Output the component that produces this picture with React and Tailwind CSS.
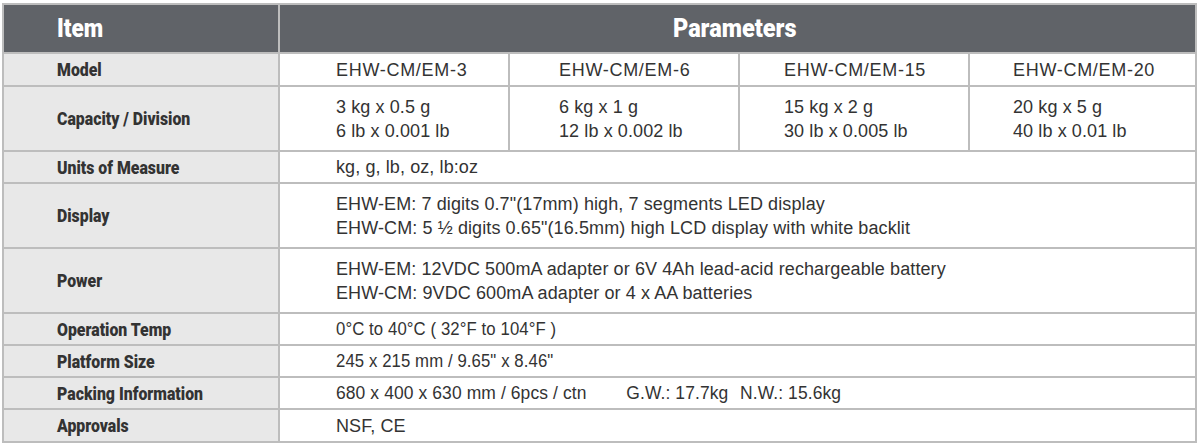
import React from "react";

const cond = "[font-family:Roboto,'Liberation_Sans',sans-serif] font-black";
const label = `bg-[#e8e8e8] pl-[53px] flex items-center text-[18px] text-[#333] ${cond}`;
const val = "bg-white flex flex-col justify-center text-[18px] leading-[24px] text-[#333] tracking-[0.1px] [font-family:'Liberation_Sans',Arial,sans-serif]";
const sx = "inline-block origin-left scale-x-[0.88] whitespace-nowrap";
const narrow = "inline-block origin-left scale-x-[0.93] whitespace-nowrap";

const rows = [
  { label: "Units of Measure", h: "h-[30px]", lines: ["kg, g, lb, oz, lb:oz"] },
  { label: "Display", h: "h-[63px]", lines: ['EHW-EM: 7 digits 0.7"(17mm) high, 7 segments LED display', 'EHW-CM: 5 ½ digits 0.65"(16.5mm) high LCD display with white backlit'] },
  { label: "Power", h: "h-[63px]", lines: ["EHW-EM: 12VDC 500mA adapter or 6V 4Ah lead-acid rechargeable battery", "EHW-CM: 9VDC 600mA adapter or 4 x AA batteries"] },
  { label: "Operation Temp", h: "h-[30px]", lines: ["0°C to 40°C ( 32°F to 104°F )"], s: narrow },
  { label: "Platform Size", h: "h-[30px]", lines: ['245 x 215 mm / 9.65" x 8.46"'], s: narrow },
  { label: "Packing Information", h: "h-[30px]", lines: ["PACK"] },
  { label: "Approvals", h: "h-[31px]", lines: ["NSF, CE"] },
];

function L({ children }) {
  return <span className={sx}>{children}</span>;
}

export default function App() {
  return (
    <div className="w-[1200px] h-[446px] bg-white pt-[3px] pl-[2px]">
      <div className="grid grid-cols-[274px_228px_228px_228px_225px] gap-[2px] p-[2px] bg-[#bdbdbd] w-fit">
        <div className={`h-[47px] bg-[#606368] pl-[53px] flex items-center text-white text-[25px] ${cond}`}>
          <span className="inline-block origin-left scale-x-[0.9] whitespace-nowrap">Item</span>
        </div>
        <div className={`col-span-4 h-[47px] bg-[#606368] flex items-center justify-center pr-[6px] text-white text-[25px] ${cond}`}>
          <span className="inline-block origin-center scale-x-[0.94] whitespace-nowrap">Parameters</span>
        </div>

        <div className={`${label} h-[31px]`}><L>Model</L></div>
        <div className={`${val} pl-[56px] tracking-[0.7px]`}>EHW-CM/EM-3</div>
        <div className={`${val} pl-[49px] tracking-[0.7px]`}>EHW-CM/EM-6</div>
        <div className={`${val} pl-[44px] tracking-[0.7px]`}>EHW-CM/EM-15</div>
        <div className={`${val} pl-[43px] tracking-[0.7px]`}>EHW-CM/EM-20</div>

        <div className={`${label} h-[63px]`}><L>Capacity / Division</L></div>
        <div className={`${val} pl-[56px]`}><span>3 kg x 0.5 g</span><span>6 lb x 0.001 lb</span></div>
        <div className={`${val} pl-[49px]`}><span>6 kg x 1 g</span><span>12 lb x 0.002 lb</span></div>
        <div className={`${val} pl-[44px]`}><span>15 kg x 2 g</span><span>30 lb x 0.005 lb</span></div>
        <div className={`${val} pl-[43px]`}><span>20 kg x 5 g</span><span>40 lb x 0.01 lb</span></div>

        {rows.map((r) => (
          <React.Fragment key={r.label}>
            <div className={`${label} ${r.h}`}><L>{r.label}</L></div>
            <div className={`${val} col-span-4 pl-[56px]`}>
              {r.lines[0] === "PACK" ? (
                <div>
                  <span className="inline-flex origin-left scale-x-[0.97] whitespace-nowrap">
                    <span>680 x 400 x 630 mm / 6pcs / ctn</span>
                    <span className="ml-[41px]">G.W.: 17.7kg</span>
                    <span className="ml-[12px]">N.W.: 15.6kg</span>
                  </span>
                </div>
              ) : (
                r.lines.map((l) => (
                  <div key={l}>
                    <span className={r.s || ""}>{l}</span>
                  </div>
                ))
              )}
            </div>
          </React.Fragment>
        ))}
      </div>
    </div>
  );
}
